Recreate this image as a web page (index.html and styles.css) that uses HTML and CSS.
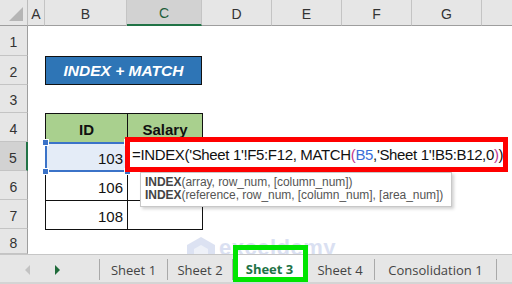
FILE: index.html
```html
<!DOCTYPE html>
<html lang="en">
<head>
  <meta charset="UTF-8">
  <title>INDEX + MATCH</title>
  <link rel="stylesheet" href="styles.css">
</head>
<body>
  <div class="book">
    <div class="sheet">
      <div class="corner"><span class="tri"></span></div>
      <div class="colhead">A</div>
      <div class="colhead">B</div>
      <div class="colhead active">C</div>
      <div class="colhead">D</div>
      <div class="colhead">E</div>
      <div class="colhead">F</div>
      <div class="colhead">G</div>
      <div class="colhead last"></div>

      <div class="rowhead r1">1</div>
      <div class="rowhead r2">2</div>
      <div class="rowhead r3">3</div>
      <div class="rowhead r4">4</div>
      <div class="rowhead r5 active">5</div>
      <div class="rowhead r6">6</div>
      <div class="rowhead r7">7</div>
      <div class="rowhead r8">8</div>

      <div class="title">INDEX + MATCH</div>

      <div class="cell th b r4">ID</div>
      <div class="cell th c r4">Salary</div>
      <div class="cell num b r5 picked">103
        <span class="handle tl"></span><span class="handle bl"></span><span class="handle tr"></span><span class="handle br"></span>
      </div>
      <div class="cell c r5"></div>
      <div class="cell num b r6">106</div>
      <div class="cell c r6"></div>
      <div class="cell num b r7">108</div>
      <div class="cell c r7"></div>

      <div class="formula">=INDEX('Sheet 1'!F5:F12, MATCH<span class="p1">(</span><span class="ref">B5</span>,'Sheet 1'!B5:B12,0<span class="p1">)</span>)</div>

      <div class="tip">
        <div><b>INDEX</b>(array, row_num, [column_num])</div>
        <div><b>INDEX</b>(reference, row_num, [column_num], [area_num])</div>
      </div>

      <div class="mark">
        <svg width="30" height="32" viewBox="0 0 30 32">
          <polygon points="15,1 29,9 29,24 15,31 1,24 1,9" fill="#c6d0ea"/>
          <polygon points="15,9 22,13 22,21 15,25 8,21 8,13" fill="#e4e9f5"/>
        </svg>
        <div class="mark-text">
          <span class="mark-name">exceldemy</span>
          <span class="mark-sub">EXCEL · DATA · BI</span>
        </div>
      </div>
    </div>

    <div class="tabs">
      <div class="nav">
        <span class="arrow left"></span>
        <span class="arrow right"></span>
      </div>
      <div class="tab t1">Sheet 1</div>
      <div class="tab t2">Sheet 2</div>
      <div class="tab current">Sheet 3</div>
      <div class="tab t4">Sheet 4</div>
      <div class="tab wide">Consolidation 1</div>
    </div>
  </div>
</body>
</html>
```

FILE: styles.css
```css
body { margin: 0; background: #fff; font-family: "Liberation Sans", Arial, sans-serif; }
.book { width: 512px; height: 284px; overflow: hidden; display: flex; flex-direction: column; }

.sheet {
  position: relative;
  height: 254px;
  flex: none;
  display: grid;
  grid-template-columns: 28px 17px 82px 75px 70px 70px 70px 70px 1fr;
  grid-template-rows: 26px 30px 29px 28px 29px 29px 29px 29px 1fr;
}

.corner { background: #e6e6e6; border-right: 1px solid #bcbcbc; border-bottom: 1px solid #9e9e9e; position: relative; }
.tri { position: absolute; right: 4px; bottom: 4px; width: 0; height: 0; border-left: 14px solid transparent; border-bottom: 14px solid #b5b5b5; }

.colhead {
  background: #e6e6e6;
  border-right: 1px solid #c4c4c4;
  border-bottom: 1px solid #9e9e9e;
  display: flex; align-items: center; justify-content: center;
  font-size: 14px; color: #333;
  padding-top: 2px;
}
.colhead.active { background: #d2d2d2; border-bottom: 2px solid #217346; color: #1e5e3a; }
.colhead.last { border-right: none; }

.rowhead {
  grid-column: 1;
  background: #e6e6e6;
  border-right: 1px solid #9e9e9e;
  border-bottom: 1px solid #c4c4c4;
  display: flex; align-items: center; justify-content: center;
  font-size: 14px; color: #333;
  padding-top: 3px;
}
.rowhead.active { background: #d2d2d2; border-right: 2px solid #217346; }

.r1 { grid-row: 2; }
.r2 { grid-row: 3; }
.r3 { grid-row: 4; }
.r4 { grid-row: 5; }
.r5 { grid-row: 6; }
.r6 { grid-row: 7; }
.r7 { grid-row: 8; }
.r8 { grid-row: 9; }
.b { grid-column: 3; }
.c { grid-column: 4; }

.title {
  grid-row: 3; grid-column: 3 / 5;
  background: #2e75b6;
  border: 1px solid #111;
  color: #fff;
  font-weight: bold; font-style: italic;
  font-size: 15.5px;
  display: flex; align-items: center; justify-content: center;
  padding-top: 1px;
}

.cell {
  border: 1px solid #111;
  margin: 0 -1px -1px 0;
  font-size: 15px; color: #111;
  display: flex; align-items: center;
  padding: 3px 4px 0;
}
.cell.th { background: #a9d08e; font-weight: bold; justify-content: center; }
.cell.num { justify-content: flex-end; }
.cell.picked { position: relative; background: #e4ecf7; box-shadow: inset 0 0 0 1px #3b73c8; border-color: #3b73c8; }
.handle { position: absolute; width: 5px; height: 5px; background: #3b73c8; border: 1px solid #fff; }
.handle.tl { left: -4px; top: -4px; }
.handle.bl { left: -4px; bottom: -4px; }
.handle.tr { right: -4px; top: -4px; }
.handle.br { right: -4px; bottom: -4px; }

.formula {
  position: absolute; left: 125px; top: 137px;
  width: 371px; height: 25px;
  border: 5px solid #ff0000;
  background: #fff;
  font-size: 15px; letter-spacing: -0.35px; color: #111;
  line-height: 25px;
  padding-left: 2px;
  white-space: nowrap;
}
.ref { color: #3a6fd8; }
.p1 { color: #c2378f; }

.tip {
  position: absolute; left: 140px; top: 172px;
  width: 306px;
  background: #fff;
  border: 1px solid #c8c8c8;
  box-shadow: 2px 2px 3px rgba(0, 0, 0, 0.18);
  padding: 3px 0 4px 4px;
  font-size: 12px; letter-spacing: -0.05px; color: #555;
  line-height: 13px;
  white-space: nowrap;
}
.tip b { color: #444; }

.mark { position: absolute; left: 186px; top: 236px; display: flex; align-items: center; gap: 3px; opacity: 0.6; }
.mark-text { display: flex; flex-direction: column; line-height: 1; }
.mark-name { font-size: 22px; font-weight: bold; color: #c3cdea; letter-spacing: 0.5px; }
.mark-sub { font-size: 7px; color: #c9c9c9; letter-spacing: 2px; margin-top: 1px; }

.tabs {
  position: relative;
  height: 27px;
  flex: none;
  background: #e6e6e6;
  border-top: 1px solid #c6c6c6;
  border-bottom: 2px solid #d4d4d4;
  display: flex; align-items: stretch;
  font-family: "Open Sans", "Noto Sans", sans-serif;
  font-size: 13px; color: #444;
}
.nav { width: 100px; flex: none; display: flex; align-items: center; border-right: 1px solid #a9a9a9; margin: 4px 0 2px; box-sizing: border-box; }
.arrow { width: 0; height: 0; border-top: 5px solid transparent; border-bottom: 5px solid transparent; }
.arrow.left { border-right: 5px solid #c3c3c3; margin-left: 25px; }
.arrow.right { border-left: 5px solid #1f6b3a; margin-left: 25px; }

.tab {
  flex: none;
  box-sizing: border-box;
  display: flex; align-items: center; justify-content: center;
  border-right: 1px solid #a9a9a9;
  margin: 4px 0 2px;
  white-space: nowrap;
}
.tab.t1 { width: 68px; }
.tab.t2 { width: 65px; }
.tab.t4 { width: 69px; }
.tab.wide { width: 122px; }
.tab.current {
  position: relative;
  width: 73px;
  margin: 0;
  background: #fff;
  color: #217346;
  font-weight: bold;
  border-right: none;
}
.tab.current::after {
  content: "";
  position: absolute; left: 0; right: -2px; top: -10px; bottom: 0;
  border: 5px solid #00e500;
}
```
